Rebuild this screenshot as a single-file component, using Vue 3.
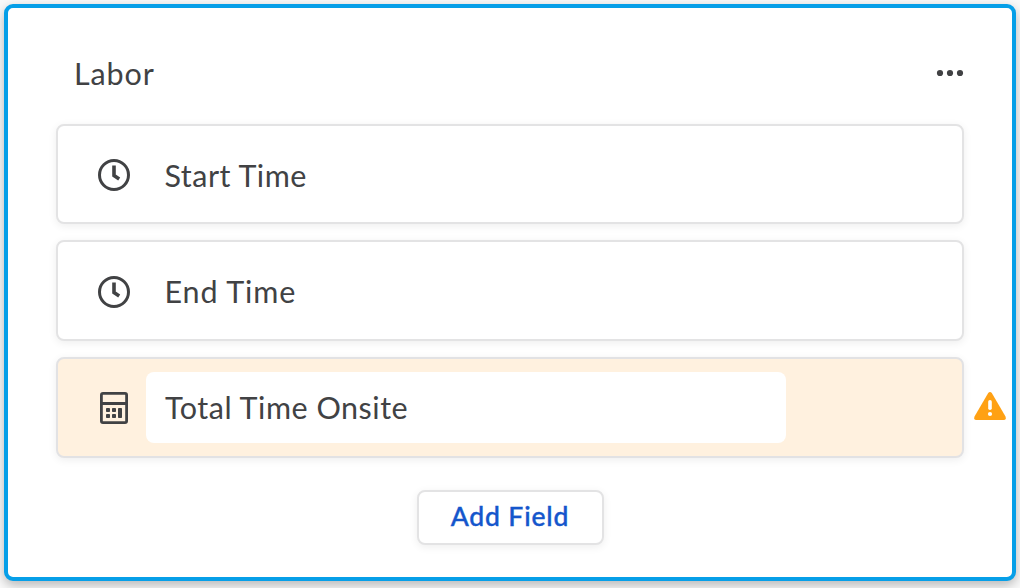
<script setup>
const fields = [
  { id: 'start', label: 'Start Time', icon: 'clock' },
  { id: 'end', label: 'End Time', icon: 'clock' },
  { id: 'total', label: 'Total Time Onsite', icon: 'calculator', active: true },
]
</script>

<template>
  <main class="page">
    <section class="panel">
      <header class="header">
        <h1 class="title">Labor</h1>
        <svg class="more" width="28" height="8" viewBox="0 0 28 8" aria-label="More">
          <circle cx="4" cy="4" r="3.1" />
          <circle cx="14" cy="4" r="3.1" />
          <circle cx="24" cy="4" r="3.1" />
        </svg>
      </header>
      <div class="fields">
        <div v-for="f in fields" :key="f.id" class="field" :class="[f.id, { active: f.active }]">
          <svg v-if="f.icon === 'clock'" class="icon" width="32" height="32" viewBox="0 0 32 32">
            <circle cx="16" cy="16" r="14.5" fill="none" stroke="#414244" stroke-width="3" />
            <path d="M16 6.5V16.5L21.2 20" fill="none" stroke="#414244" stroke-width="3.6" />
          </svg>
          <svg v-else class="icon" width="32" height="32" viewBox="0 0 32 32">
            <rect x="3.4" y="1.4" width="25.2" height="29.2" rx="1.6" fill="none" stroke="#414244" stroke-width="2.8" />
            <path d="M3 11.5H29" stroke="#414244" stroke-width="3" />
            <g fill="#414244">
              <rect x="8" y="16" width="4" height="4" rx=".8" />
              <rect x="14" y="16" width="4" height="4" rx=".8" />
              <rect x="8" y="22" width="4" height="4" rx=".8" />
              <rect x="14" y="22" width="4" height="4" rx=".8" />
              <rect x="20" y="16" width="4" height="10" rx=".8" />
            </g>
          </svg>
          <div class="name"><span>{{ f.label }}</span></div>
          <svg v-if="f.active" class="warning" width="32" height="28" viewBox="0 0 32 28">
            <path d="M14.2 1.1Q16 -1.1 17.8 1.1L31.5 24.6Q32.6 28 29.5 28H2.5Q-.6 28 .5 24.6Z" fill="#ffa114" />
            <path d="M16 9.8V16.2" stroke="#fff" stroke-width="3.6" stroke-linecap="round" />
            <circle cx="16" cy="22" r="2.1" fill="#fff" />
          </svg>
        </div>
      </div>
      <button class="add">Add Field</button>
    </section>
  </main>
</template>

<style>
body {
  background: #fafafa;
}
</style>

<style scoped>
.page {
  box-sizing: border-box;
  width: 1020px;
  height: 588px;
  padding: 4px 4px 7px;
  overflow: hidden;
  font-family: Lato, sans-serif;
  color: #414244;
}
.panel {
  box-sizing: border-box;
  height: 577px;
  padding: 0 48px;
  display: flex;
  flex-direction: column;
  align-items: center;
  background: #fff;
  border: 4px solid #069fe8;
  border-radius: 9px;
  box-shadow: 0 4px 12px rgba(0, 0, 0, 0.28);
}
.header {
  box-sizing: border-box;
  width: 100%;
  height: 116px;
  padding: 0 0 0 18px;
  display: flex;
  align-items: flex-start;
  justify-content: space-between;
}
.title {
  margin: 47px 0 0;
  font-size: 30.5px;
  line-height: 36px;
  font-weight: 400;
  letter-spacing: 0.9px;
}
.more {
  margin-top: 61px;
  fill: #414244;
}
.fields {
  width: 100%;
  display: grid;
  grid-template-rows: 100px 101px 101px;
  row-gap: 16px;
}
.field {
  position: relative;
  box-sizing: border-box;
  display: flex;
  align-items: center;
  padding-left: 40px;
  background: #fff;
  border: 2px solid #e3e3e4;
  border-radius: 8px;
  box-shadow: 0 2px 8px rgba(0, 0, 0, 0.07);
}
.start,
.end {
  padding-top: 2px;
}
.active {
  background: #fff1df;
  border-color: #e2e2e4;
}
.icon {
  flex: none;
}
.name {
  box-sizing: border-box;
  width: 640px;
  height: 71px;
  margin-left: 16px;
  padding-left: 19px;
  border-radius: 8px;
  background: #fff;
  font-size: 30.5px;
  line-height: 71px;
  letter-spacing: 0.52px;
  white-space: nowrap;
}
.start .name {
  padding-left: 18.4px;
}
.end .name {
  padding-left: 18.5px;
  letter-spacing: 0.88px;
}
.warning {
  position: absolute;
  left: 916px;
  top: 33px;
}
.add {
  box-sizing: border-box;
  width: 187px;
  height: 55px;
  margin: 32px 0 0;
  padding: 0 0 2px;
  background: #fff;
  border: 2px solid #e3e3e4;
  border-radius: 8px;
  box-shadow: 0 2px 8px rgba(0, 0, 0, 0.07);
  color: #1456cc;
  font-family: Lato, sans-serif;
  font-size: 26.5px;
  line-height: 49px;
  font-weight: 500;
  letter-spacing: 0.85px;
  -webkit-text-stroke: 0.4px currentColor;
}
</style>
